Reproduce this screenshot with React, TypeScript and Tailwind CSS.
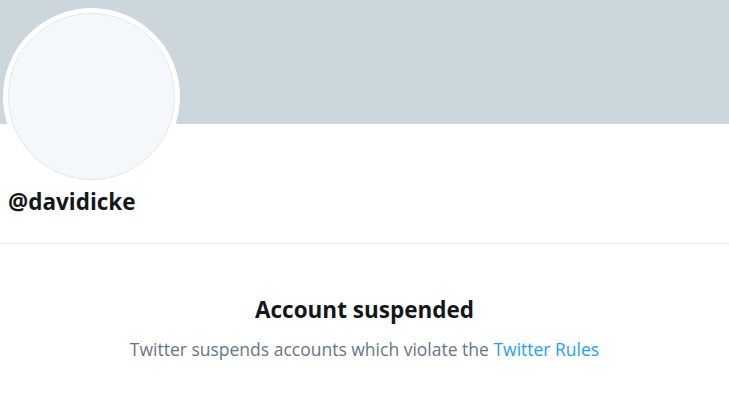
export default function App() {
  const font = { fontFamily: '"Segoe UI", "Open Sans", "Noto Sans", sans-serif' };
  return (
    <div className="w-[729px] h-[401px] bg-white overflow-hidden relative" style={font}>
      <div className="h-[124px] bg-[#ccd6dd]" />
      <div className="absolute left-[3px] top-[8px] w-[177px] h-[177px] rounded-full bg-white p-[5px]">
        <div className="w-full h-full rounded-full bg-[#f5f8fa] border border-[#e1e8ed]" />
      </div>
      <div className="h-[120px] flex items-end pb-[28px] pl-[8px] border-b border-[#e6ecf0]">
        <div className="text-[22.5px] font-bold text-[#14171a] leading-[26px]">@davidicke</div>
      </div>
      <div className="flex flex-col items-center pt-[52px]">
        <div className="text-[22.5px] font-bold text-[#14171a] leading-[28px]">Account suspended</div>
        <div className="mt-[14px] text-[17.5px] text-[#657786] leading-[22px]">
          Twitter suspends accounts which violate the <span className="text-[#1da1f2]">Twitter Rules</span>
        </div>
      </div>
    </div>
  );
}
